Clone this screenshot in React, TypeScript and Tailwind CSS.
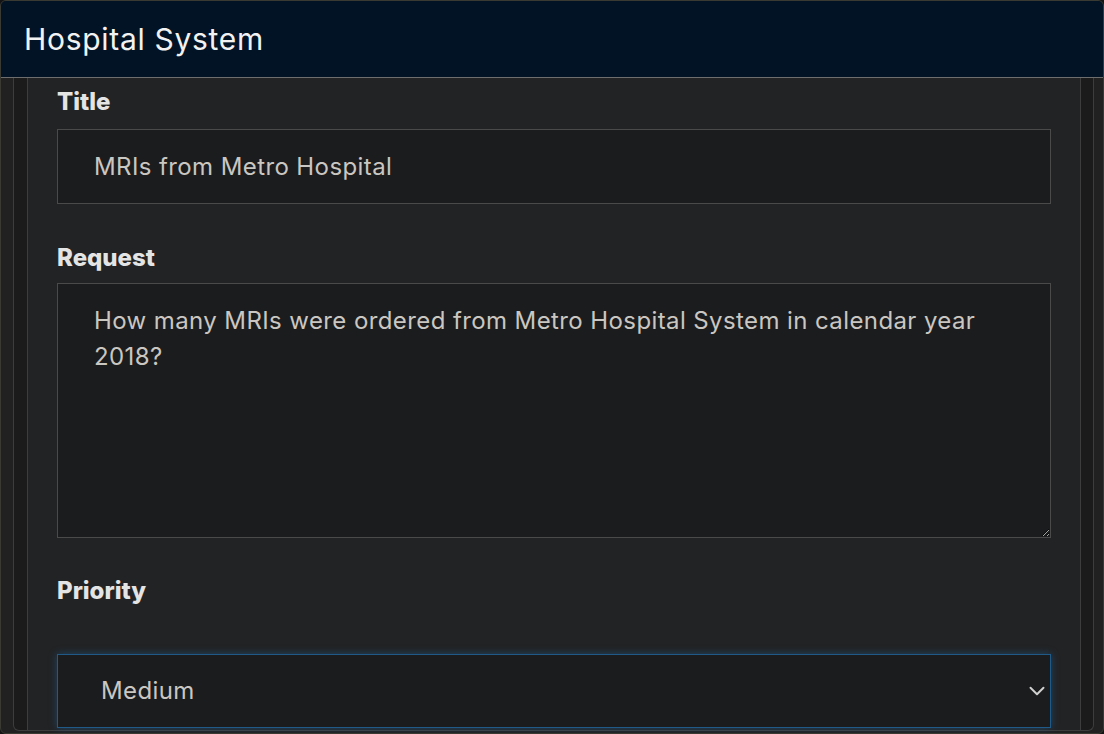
import { ChevronDown } from "lucide-react";

const font = { fontFamily: "Inter, 'Noto Sans', sans-serif" };

export default function App() {
  return (
    <div
      className="h-screen w-full overflow-hidden bg-[#141414] [color-scheme:dark]"
      style={font}
    >
      <div className="flex h-full flex-col overflow-hidden rounded-md border border-[#3a3a33] bg-[#212122]">
        {/* Top bar */}
        <header className="flex h-[77px] shrink-0 items-center border-b border-[#6e6e6e] bg-[#021325] px-[23px]">
          <h1 className="text-[30px] font-normal tracking-[0.7px] text-[#f2f2f2]">
            Hospital System
          </h1>
        </header>

        {/* Scrolled form area */}
        <div className="min-h-0 flex-1 pb-[2px] pl-[12px] pr-[9px]">
          <div className="h-full rounded-b-md border-x border-b border-[#3d3d3d] bg-[#1b1b1c] pl-[13px] pr-[12px]">
            <div className="h-full border-x border-[#3d3d3d] bg-[#222324] pl-[29px] pr-[29px] pt-[9px]">
              <label className="block text-[24px] font-extrabold leading-[30px] text-[#e4e4e4]">
                Title
              </label>
              <input
                readOnly
                defaultValue="MRIs from Metro Hospital"
                className="mt-[12px] block h-[75px] w-full border border-[#4a4a4a] bg-[#1b1c1d] px-[36px] text-[24px] tracking-[0.4px] text-[#cac6c1] outline-none"
              />

              <label className="mt-[39px] block text-[24px] font-extrabold leading-[30px] text-[#e4e4e4]">
                Request
              </label>
              <textarea
                readOnly
                defaultValue="How many MRIs were ordered from Metro Hospital System in calendar year 2018?"
                className="mt-[10px] block h-[255px] w-full resize-y border border-[#4a4a4a] bg-[#1b1c1d] px-[36px] pt-[19px] text-[24px] leading-[36px] tracking-[0.4px] text-[#cac6c1] outline-none"
              />

              <label className="mt-[38px] block text-[24px] font-extrabold leading-[30px] text-[#e4e4e4]">
                Priority
              </label>
              <div className="relative mt-[48px]">
                <select
                  defaultValue="Medium"
                  className="block h-[74px] w-full appearance-none border border-[#1f5a88] bg-[#1b1c1d] pl-[43px] text-[24px] tracking-[0.4px] text-[#cac6c1] shadow-[0_0_8px_rgba(30,110,180,0.45)] outline-none"
                >
                  <option>Low</option>
                  <option>Medium</option>
                  <option>High</option>
                </select>
                <ChevronDown
                  size={26}
                  strokeWidth={1.8}
                  className="pointer-events-none absolute right-[1px] top-1/2 -translate-y-1/2 text-[#d0d0d0]"
                />
              </div>
            </div>
          </div>
        </div>
      </div>
    </div>
  );
}
